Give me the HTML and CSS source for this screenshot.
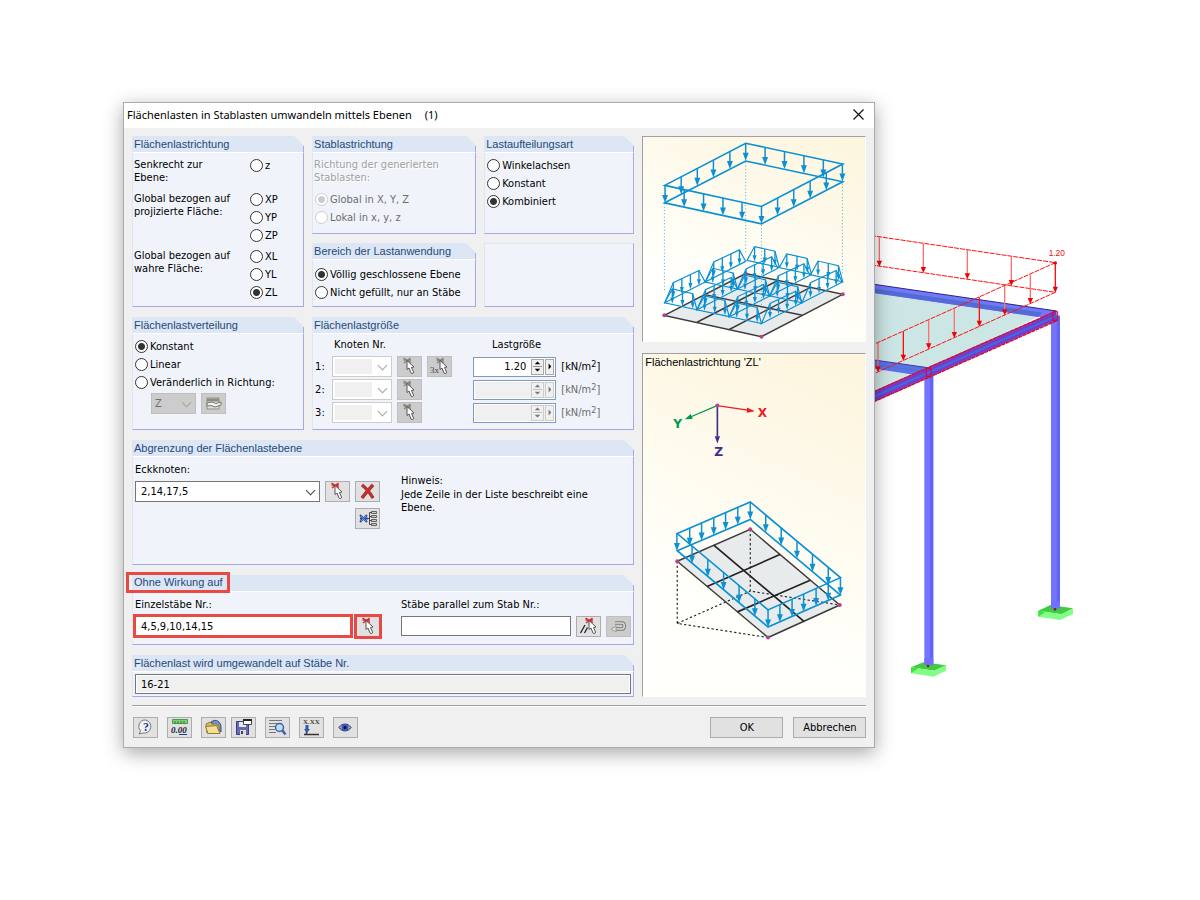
FILE: index.html
```
<!DOCTYPE html>
<html lang="de">

<head>
    <meta charset="UTF-8">
    <meta name="viewport" content="width=device-width, initial-scale=1.0">
    <title>Flächenlasten in Stablasten umwandeln</title>
    <link rel="stylesheet" href="styles.css">
</head>

<body>
    <!-- shared symbols -->
    <svg class="defs" width="0" height="0" aria-hidden="true">
        <defs>
            <g id="load"><path d="M0 0V34" stroke="#0a90d4" stroke-width="4.5"/><path d="M-9 29H9L0 53Z" fill="#0a90d4"/></g>
            <g id="small-load"><path d="M0 0V28" stroke="#0a90d4" stroke-width="4"/><path d="M-6 26H6L0 45Z" fill="#0a90d4"/></g>
            <g id="short-trap">
                <path d="M0 0L23 -42L85 -28L98 21Z" fill="none" stroke="#0a90d4" stroke-width="3.5"/>
                <use href="#small-load" x="23" y="-42"/><use href="#small-load" x="54" y="-35"/><use href="#small-load" x="85" y="-28"/>
            </g>
            <g id="long-trap">
                <path d="M0 0L26 -61L104 -98L123 -63Z" fill="none" stroke="#0a90d4" stroke-width="3.5"/>
                <use href="#small-load" x="26" y="-61"/><use href="#small-load" x="52" y="-74"/><use href="#small-load" x="78" y="-86"/><use href="#small-load" x="104" y="-98"/>
            </g>
            <g id="red-load"><path d="M0 0V72" stroke="#ff7070" stroke-width="4"/><path d="M-8 70H8L0 88Z" fill="#f00000"/></g>
            <g id="pick">
                <path d="M3.500 1L11 5.500M10.500 1L4 6M3.500 3H11" stroke="currentColor" stroke-width="1.400"/>
                <path d="M7 3.500V12.500L9 11L11 16C12 17 14 16.500 13.500 15L11.500 10.500L14 10Z" fill="#fff" stroke="#555" stroke-width="1"/>
            </g>
        </defs>
    </svg>

    <!-- model behind the dialog -->
    <svg class="scene" viewBox="0 0 1200 900" aria-hidden="true">
        <g transform="translate(865 225) scale(.33333)">
            <path d="M0 200L520 275L200 430L0 402Z" fill="#cce6e5"/>
            <path d="M0 426L150 450L0 512Z" fill="#cce6e5"/>
            <path d="M0 174L575 258V283L530 277L0 200Z" fill="#7676fb"/>
            <path d="M0 188L530 264L520 276L0 200Z" fill="#5868dc"/>
            <path d="M0 174L575 258" stroke="#27278c" stroke-width="3"/>
            <path d="M0 188L530 264" stroke="#2c7fae" stroke-width="2"/>
            <path d="M0 401L195 429L185 455L0 427Z" fill="#5e70e8"/>
            <path d="M0 401L195 429" stroke="#38389c" stroke-width="3"/>
            <path d="M0 414L190 442" stroke="#317fae" stroke-width="2"/>
            <path d="M558 272H585V1153H558Z" fill="#7474ff"/>
            <path d="M580 272V1153" stroke="#6363f2" stroke-width="9"/>
            <path d="M178 450H205V1325H178Z" fill="#7474ff"/>
            <path d="M200 450V1325" stroke="#6363f2" stroke-width="9"/>
            <path d="M0 510L572 258L578 285L0 543Z" fill="#5352e6"/>
            <path d="M0 519L572 267M0 535L576 279" stroke="#b31aa8" stroke-width="3"/>
            <path d="M0 527L574 273" stroke="#307fc0" stroke-width="3"/>
            <path d="M0 512L572 259M0 542L578 286" stroke="#f00018" stroke-width="4" stroke-dasharray="12 2"/>
            <path d="M564 260H578V286H564ZM184 430H198V455H184Z" fill="none" stroke="#e0002c" stroke-width="3"/>
            <g fill="none" stroke="#ff1010" stroke-width="3" stroke-dasharray="15 3">
                <path d="M0 29L571 113L0 370"/>
                <path d="M0 117L571 202L0 458"/>
            </g>
            <use href="#red-load" x="43" y="37"/>
            <use href="#red-load" x="175" y="56"/>
            <use href="#red-load" x="307" y="75"/>
            <use href="#red-load" x="439" y="95"/>
            <use href="#red-load" x="571" y="115"/>
            <use href="#red-load" x="496" y="149"/>
            <use href="#red-load" x="419" y="183"/>
            <use href="#red-load" x="343" y="217"/>
            <use href="#red-load" x="268" y="251"/>
            <use href="#red-load" x="191" y="285"/>
            <use href="#red-load" x="115" y="319"/>
            <use href="#red-load" x="39" y="354"/>
            <path d="M571 115V190M343 217V292M115 319V395" stroke="#f00000" stroke-width="3"/>
            <circle cx="571" cy="114" r="5" fill="#f00000"/>
            <text x="551" y="93" class="scene-text">1.20</text>
            <path d="M520 1157L556 1140L624 1150L590 1168Z" fill="#42cb42"/>
            <path d="M520 1157L590 1168L624 1150V1167L585 1185L520 1175Z" fill="#80ff84"/>
            <path d="M520 1157L542 1160L520 1175Z" fill="#3be43b"/>
            <path d="M138 1327L175 1312L243 1321L208 1337Z" fill="#42cb42"/>
            <path d="M138 1327L208 1337L243 1321V1337L205 1355L138 1345Z" fill="#80ff84"/>
            <path d="M138 1327L160 1330L138 1345Z" fill="#3be43b"/>
            <path d="M558 1130H585V1151H558ZM178 1300H205V1321H178Z" fill="#7070fc"/>
            <circle cx="570" cy="1153" r="4" fill="#7c2020"/>
            <circle cx="189" cy="1323" r="4" fill="#7c2020"/>
        </g>
    </svg>

    <form class="dialog">
        <header class="titlebar">
            <h1>Flächenlasten in Stablasten umwandeln mittels Ebenen</h1>
            <span class="count">(1)</span>
            <button type="button" class="close" aria-label="Schließen">
                <svg width="11" height="11" viewBox="0 0 11 11"><path d="M0.500 0.500L10.500 10.500M10.500 0.500L0.500 10.500" stroke="#111" stroke-width="1.2"/></svg>
            </button>
        </header>

        <div class="content">
            <div class="settings">
                <section class="panel direction">
                    <h2>Flächenlastrichtung</h2>
                    <div class="body">
                        <div class="choice">
                            <p>Senkrecht zur<br>Ebene:</p>
                            <div class="radios">
                                <label><input type="radio" name="dir">z</label>
                            </div>
                        </div>
                        <div class="choice">
                            <p>Global bezogen auf<br>projizierte Fläche:</p>
                            <div class="radios">
                                <label><input type="radio" name="dir">XP</label>
                                <label><input type="radio" name="dir">YP</label>
                                <label><input type="radio" name="dir">ZP</label>
                            </div>
                        </div>
                        <div class="choice">
                            <p>Global bezogen auf<br>wahre Fläche:</p>
                            <div class="radios">
                                <label><input type="radio" name="dir">XL</label>
                                <label><input type="radio" name="dir">YL</label>
                                <label><input type="radio" name="dir" checked>ZL</label>
                            </div>
                        </div>
                    </div>
                </section>

                <div class="stack">
                    <section class="panel tall">
                        <h2>Stablastrichtung</h2>
                        <div class="body disabled">
                            <p>Richtung der generierten<br>Stablasten:</p>
                            <div class="radios">
                                <label><input type="radio" name="member" checked disabled>Global in X, Y, Z</label>
                                <label><input type="radio" name="member" disabled>Lokal in x, y, z</label>
                            </div>
                        </div>
                    </section>
                    <section class="panel">
                        <h2>Bereich der Lastanwendung</h2>
                        <div class="body area">
                            <div class="radios">
                                <label><input type="radio" name="area" checked>Völlig geschlossene Ebene</label>
                                <label><input type="radio" name="area">Nicht gefüllt, nur an Stäbe</label>
                            </div>
                        </div>
                    </section>
                </div>

                <div class="stack">
                    <section class="panel tall">
                        <h2>Lastaufteilungsart</h2>
                        <div class="body">
                            <div class="radios">
                                <label><input type="radio" name="split">Winkelachsen</label>
                                <label><input type="radio" name="split">Konstant</label>
                                <label><input type="radio" name="split" checked>Kombiniert</label>
                            </div>
                        </div>
                    </section>
                    <section class="panel">
                        <div class="body empty"></div>
                    </section>
                </div>

                <section class="panel distribution">
                    <h2>Flächenlastverteilung</h2>
                    <div class="body">
                        <div class="radios">
                            <label><input type="radio" name="dist" checked>Konstant</label>
                            <label><input type="radio" name="dist">Linear</label>
                            <label><input type="radio" name="dist">Veränderlich in Richtung:</label>
                        </div>
                        <div class="row axis">
                            <span class="combo gray"><select aria-label="Richtung" disabled><option>Z</option></select></span>
                            <button type="button" class="icon-btn" disabled aria-label="Bearbeiten">
                                <svg width="19" height="17" viewBox="0 0 19 17"><path d="M3 3H15V14H3Z" fill="#ddd" stroke="#8d8d85"/><path d="M3 5H15" stroke="#8d8d85" stroke-width="3"/><path d="M3 8L8 7L12 8.500L17 7V10L11 12L7 10.500L3 11Z" fill="#f4f4ee" stroke="#77776f"/></svg>
                            </button>
                        </div>
                    </div>
                </section>

                <section class="panel wide">
                    <h2>Flächenlastgröße</h2>
                    <div class="body sizes">
                        <div class="size-row head">
                            <span class="nodes">Knoten Nr.</span>
                            <span class="value">Lastgröße</span>
                        </div>
                        <div class="size-row">
                            <label for="k1">1:</label>
                            <span class="combo blank"><select id="k1" disabled><option></option></select></span>
                            <button type="button" class="icon-btn" disabled aria-label="Knoten wählen"><svg width="19" height="19" viewBox="0 0 19 19"><use href="#pick"/></svg></button>
                            <button type="button" class="icon-btn" disabled aria-label="3 Knoten wählen"><svg width="21" height="19" viewBox="0 0 21 19"><use href="#pick" x="4"/><text x="1" y="16" class="icon-text">3x</text></svg></button>
                            <span class="spin"><input type="text" value="1.20" aria-label="Lastgröße 1"><button type="button" aria-label="Wert ändern"><svg width="12" height="17" viewBox="0 0 12 17"><path d="M3 6L6 3L9 6ZM3 11L6 14L9 11Z" fill="currentColor"/><path d="M1 8.500H11" stroke="#888"/></svg></button><button type="button" aria-label="Liste"><svg width="8" height="17" viewBox="0 0 8 17"><path d="M3 5L6 8.500L3 12Z" fill="currentColor"/></svg></button></span>
                            <span class="unit">[kN/m<sup>2</sup>]</span>
                        </div>
                        <div class="size-row">
                            <label for="k2">2:</label>
                            <span class="combo blank"><select id="k2" disabled><option></option></select></span>
                            <button type="button" class="icon-btn" disabled aria-label="Knoten wählen"><svg width="19" height="19" viewBox="0 0 19 19"><use href="#pick"/></svg></button>
                            <span class="spin off"><input type="text" disabled aria-label="Lastgröße 2"><button type="button" disabled aria-label="Wert ändern"><svg width="12" height="17" viewBox="0 0 12 17"><path d="M3 6L6 3L9 6ZM3 11L6 14L9 11Z" fill="currentColor"/><path d="M1 8.500H11" stroke="#bbb"/></svg></button><button type="button" disabled aria-label="Liste"><svg width="8" height="17" viewBox="0 0 8 17"><path d="M3 5L6 8.500L3 12Z" fill="currentColor"/></svg></button></span>
                            <span class="unit off">[kN/m<sup>2</sup>]</span>
                        </div>
                        <div class="size-row">
                            <label for="k3">3:</label>
                            <span class="combo blank"><select id="k3" disabled><option></option></select></span>
                            <button type="button" class="icon-btn" disabled aria-label="Knoten wählen"><svg width="19" height="19" viewBox="0 0 19 19"><use href="#pick"/></svg></button>
                            <span class="spin off"><input type="text" disabled aria-label="Lastgröße 3"><button type="button" disabled aria-label="Wert ändern"><svg width="12" height="17" viewBox="0 0 12 17"><path d="M3 6L6 3L9 6ZM3 11L6 14L9 11Z" fill="currentColor"/><path d="M1 8.500H11" stroke="#bbb"/></svg></button><button type="button" disabled aria-label="Liste"><svg width="8" height="17" viewBox="0 0 8 17"><path d="M3 5L6 8.500L3 12Z" fill="currentColor"/></svg></button></span>
                            <span class="unit off">[kN/m<sup>2</sup>]</span>
                        </div>
                    </div>
                </section>

                <section class="panel full">
                    <h2>Abgrenzung der Flächenlastebene</h2>
                    <div class="body split boundary">
                        <div class="half">
                            <label for="corners">Eckknoten:</label>
                            <div class="row">
                                <span class="combo grow"><select id="corners"><option>2,14,17,5</option></select></span>
                                <button type="button" class="icon-btn" aria-label="Knoten wählen"><svg width="19" height="19" viewBox="0 0 19 19"><use href="#pick"/></svg></button>
                                <button type="button" class="icon-btn" aria-label="Löschen"><svg width="19" height="17" viewBox="0 0 19 17"><path d="M4 2C8 5 12 10 15 15M15 2C11 6 7 11 4 15" fill="none" stroke="#6e4040" stroke-width="3.400"/><path d="M4 2C8 5 12 10 15 15M15 2C11 6 7 11 4 15" fill="none" stroke="#de2626" stroke-width="2"/></svg></button>
                            </div>
                            <div class="row end">
                                <button type="button" class="icon-btn" aria-label="Alle löschen"><svg width="19" height="19" viewBox="0 0 19 19"><path d="M2 6L9 13M9 6L2 13M2 9.500H10" stroke="#2d4f9c" stroke-width="2"/><path d="M3 7L8 12M8 7L3 12" stroke="#6f9cec"/><path d="M10 9.500H11.500M14 3.500H11.500V15.500H14M11.500 7.500H14M11.500 11.500H14" fill="none" stroke="#444"/><path d="M13.500 2.500H18.500V4.500H13.500ZM13.500 6.500H18.500V8.500H13.500ZM13.500 10.500H18.500V12.500H13.500ZM13.500 14.500H18.500V16.500H13.500Z" fill="#ccc" stroke="#444" stroke-width=".8"/></svg></button>
                            </div>
                        </div>
                        <p class="hint"><span>Hinweis:</span>Jede Zeile in der Liste beschreibt eine Ebene.</p>
                    </div>
                </section>

                <section class="panel full">
                    <h2><span class="marked-title">Ohne Wirkung auf</span></h2>
                    <div class="body split without">
                        <div class="half">
                            <label for="single">Einzelstäbe Nr.:</label>
                            <div class="row">
                                <input class="field grow marked" id="single" type="text" value="4,5,9,10,14,15">
                                <button type="button" class="icon-btn marked" aria-label="Stäbe wählen"><svg width="19" height="19" viewBox="0 0 19 19"><use href="#pick"/></svg></button>
                            </div>
                        </div>
                        <div class="half">
                            <label for="parallel">Stäbe parallel zum Stab Nr.:</label>
                            <div class="row">
                                <input class="field grow" id="parallel" type="text">
                                <button type="button" class="icon-btn" aria-label="Stab wählen"><svg width="21" height="19" viewBox="0 0 21 19"><path d="M2.500 16L7 8M6.500 16L9.500 10.500" stroke="#222" stroke-width="1.300"/><use href="#pick" x="4"/></svg></button>
                                <button type="button" class="icon-btn" disabled aria-label="Übernehmen"><svg width="19" height="17" viewBox="0 0 19 17"><path d="M6 5H13C16 5 16 11 13 11H5" fill="none" stroke="#777" stroke-width="3.500"/><path d="M6 5H13C16 5 16 11 13 11H5" fill="none" stroke="#ddddd4" stroke-width="1.500"/><path d="M7 8L2 11L7 14Z" fill="#ddddd4" stroke="#888" stroke-width=".7"/></svg></button>
                            </div>
                        </div>
                    </div>
                </section>

                <section class="panel full">
                    <h2>Flächenlast wird umgewandelt auf Stäbe Nr.</h2>
                    <div class="body result">
                        <input class="field" type="text" value="16-21" readonly aria-label="Stäbe Nr.">
                    </div>
                </section>
            </div>

            <div class="previews">
                <figure class="preview">
                    <svg viewBox="6 18 675 621" aria-hidden="true">
                        <path d="M71 560L318 433L613 496L366 625Z" fill="#e8ebec" stroke="#3c3c3c" stroke-width="4.500"/>
                        <path d="M170 581L416 454M268 603L515 475M194 497L490 560" stroke="#3c3c3c" stroke-width="4.500"/>
                        <g stroke="#4aa9cf" stroke-width="3" stroke-dasharray="3 7">
                            <path d="M318 95V370M71 220V490M366 285V545M612 160V440"/>
                        </g>
                        <g fill="#b8418a"><circle cx="318" cy="433" r="6"/><circle cx="71" cy="560" r="6"/><circle cx="613" cy="496" r="6"/><circle cx="366" cy="625" r="6"/></g>
                        <use href="#short-trap" x="322" y="393"/><use href="#short-trap" x="420" y="415"/><use href="#short-trap" x="515" y="437"/>
                        <use href="#short-trap" x="195" y="459"/><use href="#short-trap" x="293" y="480"/><use href="#short-trap" x="391" y="501"/>
                        <use href="#short-trap" x="72" y="522"/><use href="#short-trap" x="170" y="543"/><use href="#short-trap" x="268" y="564"/>
                        <use href="#long-trap" x="195" y="459"/><use href="#long-trap" x="293" y="480"/><use href="#long-trap" x="391" y="501"/><use href="#long-trap" x="489" y="522"/>
                        <use href="#long-trap" x="72" y="522"/><use href="#long-trap" x="170" y="543"/><use href="#long-trap" x="268" y="564"/><use href="#long-trap" x="366" y="585"/>
                        <g fill="none" stroke="#0a90d4" stroke-width="5">
                            <path d="M72 165L318 37L613 100L366 229Z"/>
                            <path d="M72 218L318 91L613 154L366 282Z"/>
                        </g>
                        <use href="#load" x="318" y="37"/><use href="#load" x="377" y="50"/><use href="#load" x="436" y="62"/><use href="#load" x="495" y="75"/><use href="#load" x="554" y="88"/><use href="#load" x="612" y="100"/>
                        <use href="#load" x="73" y="165"/><use href="#load" x="131" y="178"/><use href="#load" x="190" y="191"/><use href="#load" x="249" y="203"/><use href="#load" x="307" y="216"/><use href="#load" x="366" y="229"/>
                        <use href="#load" x="122" y="139"/><use href="#load" x="171" y="113"/><use href="#load" x="220" y="88"/><use href="#load" x="270" y="62"/>
                        <use href="#load" x="415" y="203"/><use href="#load" x="464" y="178"/><use href="#load" x="514" y="152"/><use href="#load" x="563" y="127"/>
                    </svg>
                </figure>
                <figure class="preview lower">
                    <figcaption>Flächenlastrichtung 'ZL'</figcaption>
                    <svg viewBox="6 63 675 984" aria-hidden="true">
                        <g class="axis-text">
                            <path d="M231 168L325 182" stroke="#ec1c24" stroke-width="4"/><path d="M346 185L322 174L321 190Z" fill="#ec1c24"/>
                            <path d="M231 168L152 202" stroke="#00994a" stroke-width="4"/><path d="M133 210L151 194L157 209Z" fill="#00994a"/>
                            <path d="M232 168V262" stroke="#3b2f8c" stroke-width="5"/><path d="M224 261H240L232 283Z" fill="#3b2f8c"/>
                            <circle cx="232" cy="168" r="6" fill="#b8418a"/>
                            <text x="369" y="204" fill="#ec1c24">X</text>
                            <text x="111" y="236" fill="#00994a">Y</text>
                            <text x="236" y="321" fill="#3b2f8c">Z</text>
                        </g>
                        <g transform="translate(0 420)">
                            <path d="M110 221L332 124L604 354L386 453Z" fill="#e8ebec"/>
                            <path d="M110 221V410L386 453M332 124V312L604 354M110 410L332 312" fill="none" stroke="#222" stroke-width="3.500" stroke-dasharray="7 7"/>
                            <path d="M110 221L332 124L604 354L386 453Z" fill="none" stroke="#3c3c3c" stroke-width="4.500"/>
                            <path d="M221 172L495 404M201 298L422 201M293 375L514 279" stroke="#222" stroke-width="5"/>
                            <g fill="#b8418a"><circle cx="110" cy="221" r="6"/><circle cx="332" cy="124" r="6"/><circle cx="604" cy="354" r="6"/><circle cx="386" cy="453" r="6"/></g>
                            <g fill="none" stroke="#0a90d4" stroke-width="5">
                                <path d="M110 137L332 41L606 271L386 369Z"/>
                                <path d="M110 189L332 94L606 324L386 421Z"/>
                            </g>
                            <use href="#load" x="109" y="137"/><use href="#load" x="148" y="121"/><use href="#load" x="184" y="105"/><use href="#load" x="221" y="89"/><use href="#load" x="257" y="73"/><use href="#load" x="294" y="57"/><use href="#load" x="332" y="41"/>
                            <use href="#load" x="379" y="80"/><use href="#load" x="426" y="120"/><use href="#load" x="474" y="160"/><use href="#load" x="521" y="200"/><use href="#load" x="569" y="240"/><use href="#load" x="606" y="271"/>
                            <use href="#load" x="155" y="175"/><use href="#load" x="203" y="215"/><use href="#load" x="251" y="255"/><use href="#load" x="298" y="294"/><use href="#load" x="346" y="335"/><use href="#load" x="386" y="369"/>
                            <use href="#load" x="422" y="353"/><use href="#load" x="459" y="337"/><use href="#load" x="494" y="321"/><use href="#load" x="532" y="304"/><use href="#load" x="569" y="288"/>
                        </g>
                    </svg>
                </figure>
            </div>
        </div>

        <footer class="actions">
            <button type="button" class="icon-btn" aria-label="Hilfe"><svg width="19" height="19" viewBox="0 0 19 19"><path d="M9.500 2A6.500 6.500 0 1 1 7 15L3 16L4.500 13A6.500 6.500 0 0 1 9.500 2Z" fill="#eef1f6" stroke="#777"/><text x="7" y="13" class="icon-text help">?</text></svg></button>
            <button type="button" class="icon-btn" aria-label="Einheiten"><svg width="19" height="19" viewBox="0 0 19 19"><path d="M2.500 1.500H17.500V5.500H2.500Z" fill="#7ccf74" stroke="#4c9c48"/><path d="M5 3V6M8 3V6M11 3V6M14 3V6" stroke="#3b7c38"/><text x="1" y="15" class="icon-text zero">0.00</text><path d="M9 16.500H17" stroke="#223a8c"/></svg></button>
            <button type="button" class="icon-btn" aria-label="Öffnen"><svg width="19" height="19" viewBox="0 0 19 19"><path d="M7 4C12 0 17 4 17 9V14L12 8Z" fill="#6c96d8" stroke="#444c70"/><path d="M2 6L6 4L8 6H13L15 9V15H3Z" fill="#d8bd5c" stroke="#8f7938"/><path d="M1.500 8.500L12.500 7.500L16 15.500H4Z" fill="#f0e095" stroke="#8f7938"/></svg></button>
            <button type="button" class="icon-btn near" aria-label="Speichern"><svg width="19" height="19" viewBox="0 0 19 19"><path d="M2.500 3.500H14.500V16.500H2.500Z" fill="#6668b8" stroke="#3c3d80"/><path d="M5 4H12V9H5Z" fill="#e8e8f4"/><path d="M6 12H12V17H6Z" fill="#ddd"/><path d="M7 13H9V16H7Z" fill="#444"/><path d="M9.500 1.500H17.500V6.500H9.500Z" fill="#fff" stroke="#444"/><path d="M9 2H18" stroke="#222" stroke-width="2"/></svg></button>
            <button type="button" class="icon-btn" aria-label="Details"><svg width="19" height="19" viewBox="0 0 19 19"><path d="M1 2.500H14M1 5.500H14M1 8.500H7M1 11.500H7M1 14.500H8" stroke="#777"/><circle cx="11.500" cy="9.500" r="4" fill="#bfdcf8" stroke="#3e66a8" stroke-width="1.500"/><path d="M14 12L17.500 16.500" stroke="#3e66a8" stroke-width="2.500"/></svg></button>
            <button type="button" class="icon-btn" aria-label="Werte"><svg width="19" height="19" viewBox="0 0 19 19"><text x="1" y="6" class="icon-text tiny">X.XX</text><path d="M2 16.500H17M4.500 16V10" stroke="#333" stroke-width="1.500"/><path d="M5 7V12" stroke="#2c5ca8" stroke-width="3"/><path d="M2 11H8L5 15Z" fill="#2c5ca8"/></svg></button>
            <button type="button" class="icon-btn" aria-label="Ansicht"><svg width="19" height="19" viewBox="0 0 19 19"><path d="M3 9.500C6 5 12 5 15 9.500C12 14 6 14 3 9.500Z" fill="#aab8e8" stroke="#223"/><circle cx="9" cy="9.500" r="3.500" fill="#3a58cc"/><circle cx="9" cy="9.500" r="1.500" fill="#0b1030"/></svg></button>
            <span class="spacer"></span>
            <button type="submit" class="btn">OK</button>
            <button type="button" class="btn">Abbrechen</button>
        </footer>
    </form>
</body>

</html>
```
FILE: styles.css
```
* {
    margin: 0;
    padding: 0;
    box-sizing: border-box;
}

body {
    position: relative;
    min-height: 100vh;
    padding: 102px 0 32px;
    background-color: #fff;
    color: #000;
    font-family: 'DejaVu Sans Condensed', 'Liberation Sans', sans-serif;
    font-size: 11px;
    line-height: 13px;
}

input,
select,
button {
    font: inherit;
    color: inherit;
}

.defs {
    position: absolute;
}

.scene {
    position: absolute;
    top: 0;
    left: 0;
    width: 100%;
}

.scene-text {
    font-family: 'Liberation Sans', sans-serif;
    font-size: 25px;
    fill: #f01010;
}

/* dialog window */
.dialog {
    position: relative;
    width: 62.7%;
    min-width: 720px;
    margin-left: 10.25%;
    background-color: #f0f0f0;
    border: 1px solid #aaa;
    box-shadow: 0 5px 18px 0 rgba(0, 0, 0, 0.35);
}

.titlebar {
    display: flex;
    align-items: center;
    height: 25px;
    padding: 0 10px 2px 3px;
    background-color: #fff;
    font-family: 'Noto Sans', sans-serif;
}

.titlebar h1 {
    font-size: 11px;
    font-weight: normal;
}

.count {
    margin-left: 13px;
}

.close {
    display: flex;
    margin-left: auto;
    border: none;
    background: none;
}

.content {
    display: flex;
    align-items: stretch;
    gap: 8px;
    margin: 0 8px;
    padding: 8px 0;
    border-bottom: 1px solid #a0a0a0;
    box-shadow: 0 1px 0 #fff;
}

.settings {
    flex: 502;
    display: grid;
    grid-template-columns: 172fr 164fr 150fr;
    align-content: start;
    gap: 10px 8px;
}

.stack {
    display: flex;
    flex-direction: column;
    gap: 9px;
}

.panel {
    display: flex;
    flex-direction: column;
    min-width: 0;
}

.stack .panel {
    flex: 1;
}

.stack .panel.tall {
    flex: none;
    height: 98px;
}

.panel.wide {
    grid-column: span 2;
}

.panel.full {
    grid-column: 1 / -1;
}

.panel h2 {
    position: relative;
    height: 16px;
    padding-left: 2px;
    background-color: #dce6f5;
    clip-path: polygon(0 0, calc(100% - 10px) 0, 100% 10px, 100% 100%, 0 100%);
    color: #1f4a78;
    font-family: 'Liberation Sans', sans-serif;
    font-size: 11px;
    font-weight: normal;
    line-height: 17px;
    white-space: nowrap;
}

.panel h2::after {
    content: '';
    position: absolute;
    top: 10px;
    right: 0;
    bottom: 0;
    border-right: 1px solid #a6a6ec;
}

.body {
    flex: 1 0 auto;
    padding: 3px 2px 0 1px;
    background-color: #f0f4fa;
    border: 1px solid #a6a6ec;
    border-top-color: #fff;
    border-left-color: #dce6f5;
}

.body.empty {
    border-top-color: #dce6f5;
}

.radios {
    display: flex;
    flex-direction: column;
    padding-left: 1px;
}

.radios label {
    display: flex;
    align-items: center;
    gap: 2px;
    height: 18px;
    white-space: nowrap;
}

input[type="radio"] {
    appearance: none;
    flex: none;
    width: 13px;
    height: 13px;
    border: 1px solid #333;
    border-radius: 50%;
    background-color: #fff;
}

input[type="radio"]:checked {
    background-image: radial-gradient(circle, #333 3px, transparent 4px);
}

input[type="radio"]:disabled {
    border-color: #ccc;
}

input[type="radio"]:checked:disabled {
    background-image: radial-gradient(circle, #ccc 3px, transparent 4px);
}

.choice {
    display: grid;
    grid-template-columns: 115px 1fr;
    margin-bottom: 3px;
}

.choice:first-child {
    margin-bottom: 6px;
}

.choice p {
    padding-top: 2px;
}

.direction .body {
    min-height: 155px;
}

.disabled {
    color: #6d6d6d;
}

.disabled p {
    padding-top: 2px;
    margin-bottom: 6px;
    color: #a0a0a0;
    text-shadow: 1px 1px 0 #fff;
}

.disabled p,
.choice p {
    white-space: nowrap;
}

.body.area {
    padding-top: 5px;
}

.distribution .body,
.sizes {
    min-height: 97px;
}

.row {
    display: flex;
    align-items: center;
    gap: 5px;
}

.row.end {
    justify-content: flex-end;
    margin-top: 6px;
}

.row.axis {
    margin: 2px 0 0 17px;
}

.grow {
    flex: 1;
}

.icon-btn {
    display: flex;
    align-items: center;
    justify-content: center;
    flex: none;
    width: 25px;
    height: 21px;
    border: 1px solid #adadad;
    background-color: #e1e1e1;
    color: #d62a2a;
}

.icon-btn:disabled {
    border-color: #bfbfbf;
    background-color: #ccc;
    color: #858580;
}

.icon-text {
    font-family: 'Liberation Serif', serif;
    font-size: 9px;
    fill: #444;
}

.icon-text.help {
    font-size: 12px;
    font-weight: bold;
    fill: #24408c;
}

.icon-text.zero {
    font-weight: bold;
    font-style: italic;
    fill: #223;
}

.icon-text.tiny {
    font-size: 7px;
    font-weight: bold;
}

/* drop-downs */
.combo {
    position: relative;
    display: flex;
    height: 21px;
}

.combo select {
    appearance: none;
    width: 100%;
    height: 100%;
    padding: 0 20px 0 5px;
    border: 1px solid #767676;
    border-radius: 0;
    background-color: #fff;
    opacity: 1;
}

.combo::after {
    content: '';
    position: absolute;
    top: 6px;
    right: 6px;
    width: 6px;
    height: 6px;
    border: solid #444;
    border-width: 0 1px 1px 0;
    transform: rotate(45deg);
}

.combo.gray,
.combo.blank {
    flex: none;
}

.combo.gray::after,
.combo.blank::after {
    border-color: #a5a5a5;
}

.combo.gray {
    width: 45px;
}

.combo.gray select {
    padding: 0 0 0 3px;
    border-color: #bfbfbf;
    background-color: #ccc;
    color: #6d6d6d;
}

.combo.blank {
    width: 60px;
}

.combo.blank select {
    border-color: #ccc;
    background: #fff linear-gradient(#f0f0f0, #f0f0f0) no-repeat 2px 2px / 37px 15px;
}

/* load size table */
.sizes {
    padding: 0 2px;
}

.size-row {
    display: grid;
    grid-template-columns: 12px 60px 25px 25px 1fr 70px;
    column-gap: 5px;
    align-items: center;
    height: 23px;
}

.size-row.head {
    height: 21px;
}

.nodes {
    grid-column: 2 / 5;
    padding-left: 2px;
}

.value {
    grid-column: 5 / -1;
    padding-left: 35px;
}

.spin {
    grid-column: 5;
    justify-self: end;
    display: flex;
    width: 83px;
    height: 20px;
    padding: 1px;
    border: 1px solid #7f9db9;
    background-color: #fff;
}

.spin input {
    flex: 1;
    min-width: 0;
    padding-right: 5px;
    border: none;
    background: none;
    text-align: right;
}

.spin button {
    display: flex;
    align-items: center;
    justify-content: center;
    flex: none;
    width: 13px;
    border: 1px solid #a8a8a8;
    background-color: #f0f0f0;
}

.spin button + button {
    width: 9px;
    margin-left: 1px;
}

.spin.off {
    background-color: #f0f0f0;
    box-shadow: inset 0 0 0 1px #fff;
}

.spin.off button {
    border-color: #ccc;
    color: #777;
}

.unit {
    display: flex;
}

.unit sup {
    font-size: 9px;
    line-height: 9px;
}

.off {
    color: #6d6d6d;
}

/* boundary and excluded members */
.split {
    display: grid;
    grid-template-columns: 245px 1fr;
    column-gap: 21px;
    padding: 6px 2px 0;
}

.half label {
    display: block;
    height: 18px;
}

.boundary {
    min-height: 109px;
}

.hint {
    padding-top: 11px;
    max-width: 200px;
}

.hint span {
    display: block;
    margin-bottom: 1px;
}

.field {
    min-width: 0;
    width: 100%;
    height: 20px;
    padding: 0 5px;
    border: 1px solid #767676;
    background-color: #fff;
}

.without {
    min-height: 54px;
}

.without .row {
    height: 20px;
}

.marked {
    outline: 3px solid #e84a43;
    outline-offset: -1px;
}

.without .field.marked {
    border-color: #fff;
}

.without .icon-btn.marked {
    width: 24px;
}

.marked-title {
    position: absolute;
    top: -3px;
    left: -6px;
    padding: 0 4px 0 5px;
    border: 3px solid #e84a43;
    line-height: 15px;
}

.panel:has(.marked-title) h2 {
    clip-path: none;
    background: linear-gradient(225deg, #f0f0f0 7px, #dce6f5 8px);
}

.body.result {
    padding: 2px;
}

.result .field {
    display: block;
    background-color: #f0f0f0;
    box-shadow: inset 0 0 0 1px #fff;
}

/* preview pictures */
.previews {
    flex: 224;
    display: flex;
    flex-direction: column;
    gap: 11px;
}

.preview {
    border: 1px solid #fff;
    border-top-color: #a0a0a0;
    border-left-color: #a0a0a0;
    background: linear-gradient(25deg, #fffffc 25%, #fdf5dc);
}

.preview svg {
    display: block;
    width: 100%;
}

.preview.lower {
    flex: 1;
}

.preview figcaption {
    padding: 2px;
    font-family: 'Liberation Sans', sans-serif;
}

.axis-text {
    font-family: 'DejaVu Sans', sans-serif;
    font-size: 37px;
    font-weight: bold;
    text-anchor: middle;
}

.actions {
    display: flex;
    align-items: center;
    gap: 9px;
    padding: 11px 8px 9px 9px;
}

.actions .near {
    margin-left: -4px;
}

.spacer {
    flex: 1;
}

.btn {
    width: 73px;
    height: 21px;
    border: 1px solid #adadad;
    background-color: #e1e1e1;
}

.spacer + .btn {
    margin-right: 1px;
}
```
